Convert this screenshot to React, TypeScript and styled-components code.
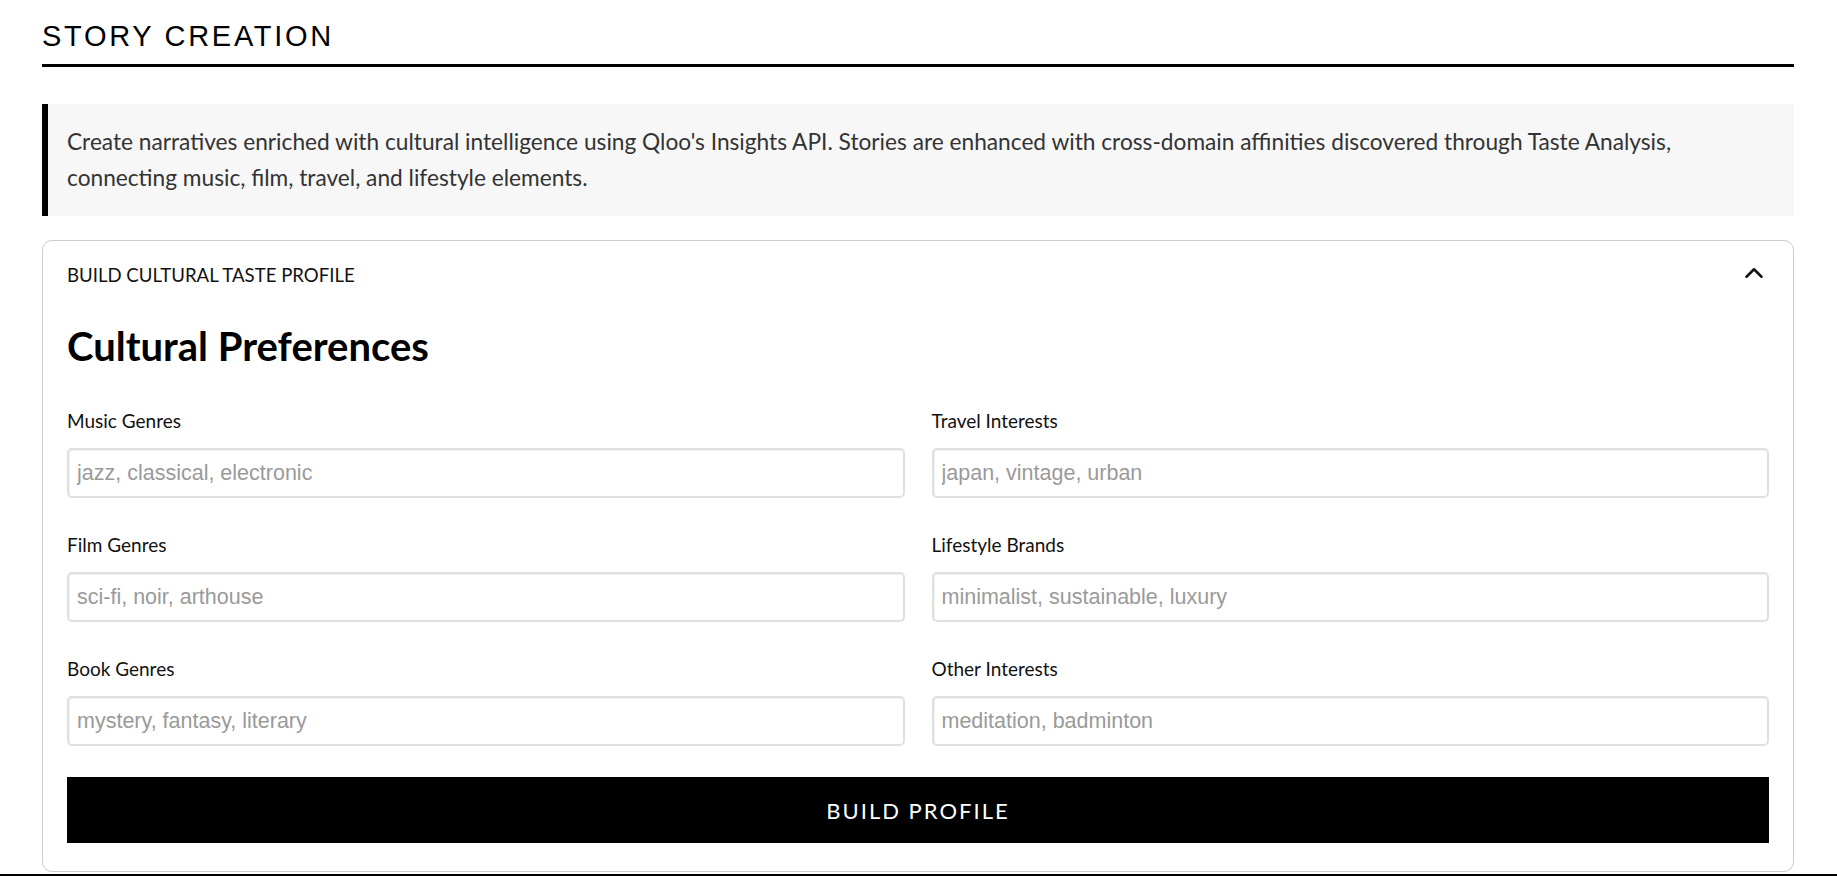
import { useState } from "react";
import styled, { createGlobalStyle } from "styled-components";
import { ChevronUp } from "lucide-react";

const fields = [
  { id: "music", label: "Music Genres", placeholder: "jazz, classical, electronic" },
  { id: "travel", label: "Travel Interests", placeholder: "japan, vintage, urban" },
  { id: "film", label: "Film Genres", placeholder: "sci-fi, noir, arthouse" },
  { id: "lifestyle", label: "Lifestyle Brands", placeholder: "minimalist, sustainable, luxury" },
  { id: "book", label: "Book Genres", placeholder: "mystery, fantasy, literary" },
  { id: "other", label: "Other Interests", placeholder: "meditation, badminton" },
];

const App = () => {
  const [open, setOpen] = useState(true);
  const [values, setValues] = useState<Record<string, string>>({});

  const handleChange = (id: string) => (e: React.ChangeEvent<HTMLInputElement>) =>
    setValues((prev) => ({ ...prev, [id]: e.target.value }));

  return (
    <>
      <GlobalStyle />
      <Page>
        <Title>STORY CREATION</Title>

        <Intro>
          Create narratives enriched with cultural intelligence using Qloo's Insights API. Stories are
          enhanced with cross-domain affinities discovered through Taste Analysis, connecting music,
          film, travel, and lifestyle elements.
        </Intro>

        <Card>
          <CardHeader type="button" onClick={() => setOpen((prev) => !prev)}>
            <span>BUILD CULTURAL TASTE PROFILE</span>
            <Chevron size={30} strokeWidth={2} />
          </CardHeader>

          {open && (
            <>
              <SectionTitle>Cultural Preferences</SectionTitle>
              <FieldsGrid>
                {fields.map((field) => (
                  <Field key={field.id}>
                    <Label htmlFor={field.id}>{field.label}</Label>
                    <Input
                      id={field.id}
                      placeholder={field.placeholder}
                      value={values[field.id] || ""}
                      onChange={handleChange(field.id)}
                    />
                  </Field>
                ))}
              </FieldsGrid>
              <SubmitButton type="button">BUILD PROFILE</SubmitButton>
            </>
          )}
        </Card>
      </Page>
      <BottomRule />
    </>
  );
};

const GlobalStyle = createGlobalStyle`
  * {
    box-sizing: border-box;
  }
  body {
    margin: 0;
    overflow: hidden;
    background: #fff;
    color: #000;
    font-family: Lato, "Open Sans", sans-serif;
  }
`;

const Page = styled.main`
  padding: 20px 43px 0 42px;
`;

const Title = styled.h1`
  margin: 0;
  padding-bottom: 11px;
  border-bottom: 3px solid #000;
  font-family: "Liberation Sans", Arial, sans-serif;
  font-size: 29px;
  font-weight: 400;
  line-height: 33px;
  letter-spacing: 2.7px;
`;

const Intro = styled.p`
  margin: 37px 0 0;
  padding: 20px 48px 20px 19px;
  border-left: 6px solid #000;
  background: #f7f7f7;
  color: #333;
  font-size: 22.7px;
  line-height: 36px;
`;

const Card = styled.section`
  margin-top: 24px;
  padding: 0 24px 28px;
  border: 1px solid #cccccc;
  border-radius: 10px;
`;

const CardHeader = styled.button`
  display: flex;
  width: 100%;
  align-items: center;
  justify-content: space-between;
  padding: 20px 0 22px;
  border: none;
  background: none;
  color: #111;
  font-family: inherit;
  font-size: 18.6px;
  line-height: 26px;
  cursor: pointer;
`;

const Chevron = styled(ChevronUp)`
  margin-top: -3px;
`;

const SectionTitle = styled.h2`
  margin: 12px 0 39px;
  font-size: 40px;
  font-weight: 700;
  line-height: 48px;
`;

const FieldsGrid = styled.div`
  display: grid;
  grid-template-columns: 1fr 1fr;
  column-gap: 27px;
  row-gap: 35px;
`;

const Field = styled.div`
  display: flex;
  flex-direction: column;
`;

const Label = styled.label`
  margin-bottom: 15px;
  color: #111;
  font-size: 19px;
  line-height: 24px;
`;

const Input = styled.input`
  height: 50px;
  width: 100%;
  padding: 0 8px;
  border: 2px solid #e0e0e0;
  border-radius: 5px;
  box-shadow: inset 1px 1px 1px rgba(0, 0, 0, 0.06);
  background: #fff;
  font-family: "Liberation Sans", Arial, sans-serif;
  font-size: 21.5px;
  color: #222;
  outline: none;

  &::placeholder {
    color: #9a9a9a;
  }
`;

const SubmitButton = styled.button`
  display: block;
  width: 100%;
  height: 66px;
  margin-top: 31px;
  border: none;
  background: #000;
  color: #fff;
  font-family: inherit;
  font-size: 22px;
  letter-spacing: 2px;
  cursor: pointer;
`;

const BottomRule = styled.div`
  margin-top: 2px;
  border-top: 2px solid #000;
`;

export default App;
